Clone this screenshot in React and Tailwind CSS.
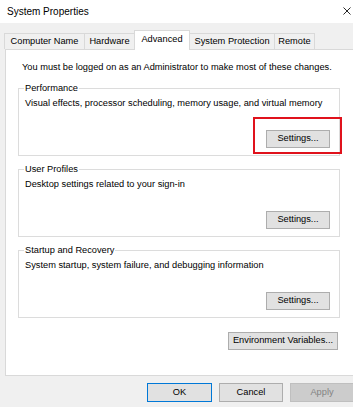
import React from 'react';

const Button = ({ children, className = '' }) => (
  <button className={`h-[18px] border border-[#adadad] bg-[#e1e1e1] text-[9.25px] leading-none text-black ${className}`}>
    {children}
  </button>
);

const Group = ({ title, desc, highlight }) => (
  <fieldset className="border border-[#dcdcdc] w-[322px] h-[74px] px-[6px]">
    <legend className="text-[9.25px] leading-[12px] px-[1px] -ml-[1px]">{title}</legend>
    <p className="text-[9.25px] leading-[12px] mt-[3px]">{desc}</p>
    <div className="flex justify-end mt-[15px] pr-[3px]">
      <div className="relative">
        <Button className="w-[64px]">Settings...</Button>
        {highlight && (
          <span className="absolute -left-[13px] -right-[12px] -top-[7px] -bottom-[6px] border-2 border-[#e0121c]" />
        )}
      </div>
    </div>
  </fieldset>
);

const tabs = [
  { name: 'Computer Name', w: 'w-[80px]', cls: 'border-l border-t' },
  { name: 'Hardware', w: 'w-[50px]', cls: 'border-l border-t' },
  { name: 'Advanced', w: 'w-[56px]', cls: 'border-l border-t border-r', active: true },
  { name: 'System Protection', w: 'w-[85px]', cls: 'border-t border-r' },
  { name: 'Remote', w: 'w-[40px]', cls: 'border-t border-r' },
];

export default function App() {
  return (
    <div className="w-[353px] h-[407px] bg-[#f0f0f0] overflow-hidden text-black font-['Liberation_Sans',Arial,sans-serif]">
      {/* title bar */}
      <div className="h-[23px] bg-white flex items-center justify-between pl-[7px] pr-[2px]">
        <span className="text-[10px] leading-none">System Properties</span>
        <svg width="8" height="8" viewBox="0 0 8 8" className="mt-[-1px]">
          <path d="M0.5 0.5 L7.5 7.5 M7.5 0.5 L0.5 7.5" stroke="#111" strokeWidth="0.9" />
        </svg>
      </div>

      {/* tabs */}
      <div className="flex items-end h-[19px] mt-[7px] pl-[4px]">
        {tabs.map((t) => (
          <div
            key={t.name}
            className={`${t.w} ${t.cls} border-[#d9d9d9] flex items-center justify-center text-[9.25px] ${
              t.active ? 'h-[20px] -mb-px bg-white relative z-10 pb-[2px]' : 'h-[16px] bg-[#f0f0f0]'
            }`}
          >
            {t.name}
          </div>
        ))}
      </div>

      {/* panel */}
      <div className="ml-[5px] w-[352px] h-[327px] border border-[#d9d9d9] bg-white pl-[12px] pt-[11px]">
        <p className="text-[9.25px] leading-[12px] pl-[4px]">
          You must be logged on as an Administrator to make most of these changes.
        </p>
        <div className="mt-[9px] flex flex-col gap-[7px]">
          <Group
            title="Performance"
            desc="Visual effects, processor scheduling, memory usage, and virtual memory"
            highlight
          />
          <Group title="User Profiles" desc="Desktop settings related to your sign-in" />
          <Group title="Startup and Recovery" desc="System startup, system failure, and debugging information" />
        </div>
        <div className="w-[322px] flex justify-end mt-[14px] pr-[2px]">
          <Button className="w-[110px]">Environment Variables...</Button>
        </div>
      </div>

      {/* dialog buttons */}
      <div className="flex gap-[7px] mt-[7px] pl-[147px]">
        <button className="w-[65px] h-[19px] shrink-0 border border-[#0078d7] bg-[#e1e1e1] text-[9.25px]">OK</button>
        <button className="w-[64px] h-[19px] shrink-0 border border-[#adadad] bg-[#e1e1e1] text-[9.25px]">Cancel</button>
        <button className="w-[64px] h-[19px] shrink-0 border border-[#bfbfbf] bg-[#cccccc] text-[9.25px] text-[#838383]">Apply</button>
      </div>
    </div>
  );
}
